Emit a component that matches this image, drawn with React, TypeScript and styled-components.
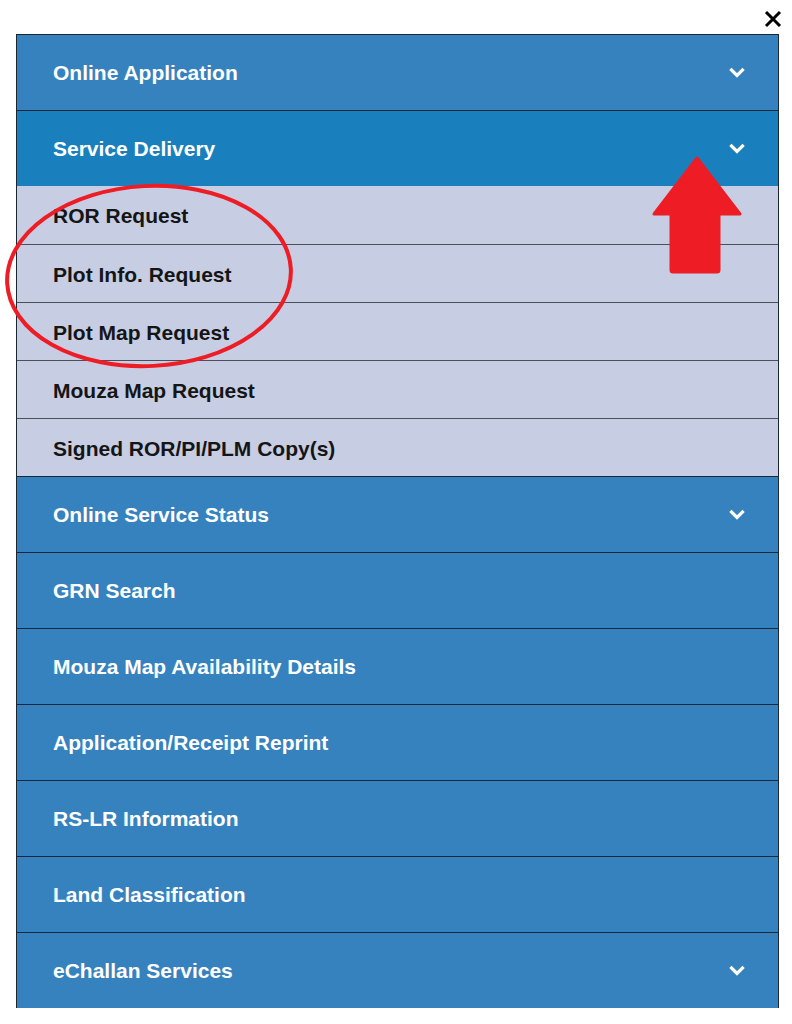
import React from "react";
import styled, { createGlobalStyle } from "styled-components";

const GlobalStyle = createGlobalStyle`
  html, body {
    margin: 0;
    padding: 0;
    background: #fff;
    font-family: "Liberation Sans", Arial, sans-serif;
  }
`;

type TMenu = { label: string; arrow?: boolean; active?: boolean; children?: string[] };

const menu: TMenu[] = [
  { label: "Online Application", arrow: true },
  {
    label: "Service Delivery",
    arrow: true,
    active: true,
    children: [
      "ROR Request",
      "Plot Info. Request",
      "Plot Map Request",
      "Mouza Map Request",
      "Signed ROR/PI/PLM Copy(s)",
    ],
  },
  { label: "Online Service Status", arrow: true },
  { label: "GRN Search" },
  { label: "Mouza Map Availability Details" },
  { label: "Application/Receipt Reprint" },
  { label: "RS-LR Information" },
  { label: "Land Classification" },
  { label: "eChallan Services", arrow: true },
];

const Chevron = () => (
  <svg width="16" height="12" viewBox="0 0 16 12">
    <path d="M2.5 3 L8 8.5 L13.5 3" fill="none" stroke="#fff" strokeWidth="3.2" strokeLinecap="square" />
  </svg>
);

const App = () => {
  return (
    <>
      <GlobalStyle />
      <SPage>
        <STop>
          <SClose aria-label="close">
            <svg width="20" height="20" viewBox="0 0 20 20">
              <path d="M3 3 L17 17 M17 3 L3 17" stroke="#000" strokeWidth="3" />
            </svg>
          </SClose>
        </STop>
        <SPanel>
          {menu.map((m) => (
            <React.Fragment key={m.label}>
              <SRow $active={m.active}>
                <span>{m.label}</span>
                {m.arrow && <Chevron />}
              </SRow>
              {m.children?.map((c) => (
                <SSubRow key={c}>{c}</SSubRow>
              ))}
            </React.Fragment>
          ))}
          <SEllipse width="300" height="200" viewBox="0 0 300 200">
            <ellipse cx="146" cy="93" rx="142" ry="90" fill="none" stroke="#ee1c25" strokeWidth="4" transform="rotate(-3 146 93)" />
          </SEllipse>
          <SArrow width="92" height="120" viewBox="0 0 92 120">
            <path
              d="M46 2 L89 58 L68 58 L68 114 Q68 116 66 116 L22 116 Q20 116 20 114 L20 58 L3 58 Z"
              fill="#ee1c25"
              stroke="#ee1c25"
              strokeWidth="3"
              strokeLinejoin="round"
            />
          </SArrow>
        </SPanel>
      </SPage>
    </>
  );
};

export default App;

const SPage = styled.div`
  width: 792px;
  height: 1024px;
  padding: 0 13px 0 16px;
  box-sizing: border-box;
`;

const STop = styled.div`
  height: 34px;
  display: flex;
  justify-content: flex-end;
  align-items: flex-end;
`;

const SClose = styled.div`
  width: 20px;
  height: 20px;
  margin-right: -4px;
  margin-bottom: 5px;
`;

const SPanel = styled.div`
  position: relative;
  border: 1px solid #1b2633;
  border-bottom: none;
  display: flex;
  flex-direction: column;
`;

const SRow = styled.div<{ $active?: boolean }>`
  height: 75px;
  display: flex;
  align-items: center;
  justify-content: space-between;
  padding: 0 33px 0 36px;
  background: ${(p) => (p.$active ? "#1a80bd" : "#3582bf")};
  color: #fff;
  font-size: 21px;
  font-weight: bold;
  border-top: 1px solid #14283c;
  &:first-child {
    border-top: none;
  }
`;

const SSubRow = styled.div`
  height: 58px;
  display: flex;
  align-items: center;
  padding: 2px 36px 0;
  box-sizing: border-box;
  background: #c7cde3;
  color: #151515;
  font-size: 21px;
  font-weight: bold;
  border-top: 1px solid #4a4f5a;
  &:nth-child(3) {
    border-top: none;
  }
`;

const SEllipse = styled.svg`
  position: absolute;
  left: -14px;
  top: 148px;
  pointer-events: none;
`;

const SArrow = styled.svg`
  position: absolute;
  left: 634px;
  top: 121px;
  pointer-events: none;
`;
